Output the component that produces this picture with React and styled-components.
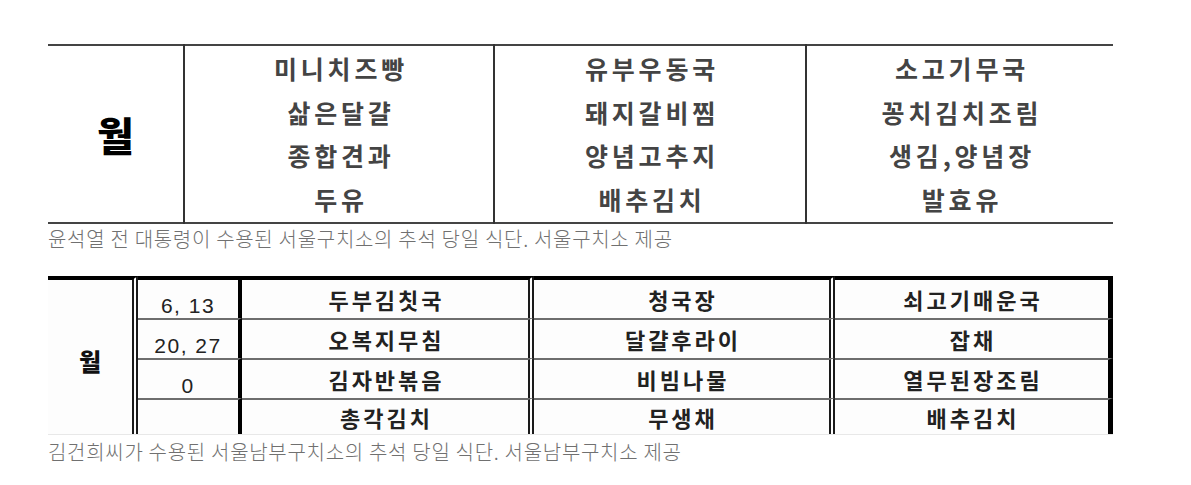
import styled, {createGlobalStyle} from "styled-components";

const GlobalStyle = createGlobalStyle`
  body {
    margin: 0;
    background: #fff;
    font-family: "Noto Sans CJK KR", "Noto Sans", sans-serif;
  }
`;

const Page = styled.div`
  padding: 44px 0 0 48px;
  width: 1065px;
`;

const Figure = styled.figure`
  margin: 0;
`;

const Caption = styled.figcaption`
  font-size: 20px;
  font-weight: 300;
  color: #707070;
  line-height: 24px;
  letter-spacing: 0.7px;
  padding-top: ${(p) => p.$gap}px;
`;

// 첫 번째 표 (서울구치소)
const MenuTable = styled.table`
  width: 1065px;
  table-layout: fixed;
  border-collapse: collapse;
  border-top: 2px solid #444;
  border-bottom: 2px solid #444;
`;

const Col = styled.col`
  width: ${(p) => p.$w}px;
`;

const DayCell = styled.td`
  text-align: center;
  vertical-align: middle;
  font-size: 40px;
  font-weight: 900;
  color: #000;
  padding: 0;
`;

const MenuCell = styled.td`
  border-left: 2px solid #333;
  text-align: center;
  vertical-align: top;
  padding: 1px 0 0 4px;
  font-size: 25px;
  font-weight: 700;
  letter-spacing: 3.8px;
  color: #444;
  line-height: 43.5px;
  height: 175px;
`;

// 두 번째 표 (서울남부구치소)
const ClipBox = styled.div`
  margin-top: 25px;
  height: 158px;
  overflow: hidden;
  border-bottom: 1px solid #e8e8e8;
  background: #fdfdfd;
`;

const WeekTable = styled.table`
  width: 1065px;
  table-layout: fixed;
  border-collapse: separate;
  border-spacing: 0;
`;

const Cell = styled.td`
  box-sizing: border-box;
  width: ${(p) => p.$w}px;
  padding: 0;
  text-align: center;
  vertical-align: middle;
  color: #222;
  border-top: ${(p) => (p.$first ? "4px solid #000" : "2px solid #6e6e6e")};
  border-right: ${(p) =>
    p.$edge === "double"
      ? "6px double #1a1a1a"
      : p.$edge === "thick"
      ? "4px solid #000"
      : p.$edge === "end"
      ? "5px solid #000"
      : "none"};
`;

const WeekDay = styled(Cell)`
  font-size: 24px;
  font-weight: 900;
  color: #111;
  padding-top: 6px;
`;

const DateCell = styled(Cell)`
  font-family: "Liberation Sans", "Noto Sans", sans-serif;
  font-size: 21px;
  letter-spacing: 1.5px;
  vertical-align: bottom;
  line-height: 24px;
`;

const DishCell = styled(Cell)`
  font-size: 22px;
  font-weight: 700;
  letter-spacing: 3px;
  padding-left: 3px;
`;

const Row = styled.tr`
  height: ${(p) => p.$h}px;
`;

const first = [
  ["미니치즈빵", "삶은달걀", "종합견과", "두유"],
  ["유부우동국", "돼지갈비찜", "양념고추지", "배추김치"],
  ["소고기무국", "꽁치김치조림", "생김,양념장", "발효유"],
];

const second = [
  {date: "6, 13", dishes: ["두부김칫국", "청국장", "쇠고기매운국"], h: 42},
  {date: "20, 27", dishes: ["오복지무침", "달걀후라이", "잡채"], h: 40},
  {date: "0", dishes: ["김자반볶음", "비빔나물", "열무된장조림"], h: 40},
  {date: "", dishes: ["총각김치", "무생채", "배추김치"], h: 36},
];

const App = () => {
  return (
    <Page>
      <GlobalStyle />
      <Figure>
        <MenuTable>
          <colgroup>
            <Col $w={136} />
            <Col $w={310} />
            <Col $w={312} />
            <Col $w={307} />
          </colgroup>
          <tbody>
            <tr>
              <DayCell>월</DayCell>
              {first.map((col, i) => (
                <MenuCell key={i}>
                  {col.map((item) => (
                    <div key={item}>{item}</div>
                  ))}
                </MenuCell>
              ))}
            </tr>
          </tbody>
        </MenuTable>
        <Caption $gap={3}>윤석열 전 대통령이 수용된 서울구치소의 추석 당일 식단. 서울구치소 제공</Caption>
      </Figure>

      <Figure>
        <ClipBox>
          <WeekTable>
            <tbody>
              {second.map((row, i) => (
                <Row key={i} $h={row.h}>
                  {i === 0 && (
                    <WeekDay rowSpan={4} $w={90} $first $edge="double">
                      월
                    </WeekDay>
                  )}
                  <DateCell $w={104} $first={i === 0} $edge="thick">
                    {row.date}
                  </DateCell>
                  <DishCell $w={292} $first={i === 0} $edge="double">
                    {row.dishes[0]}
                  </DishCell>
                  <DishCell $w={301} $first={i === 0} $edge="double">
                    {row.dishes[1]}
                  </DishCell>
                  <DishCell $w={278} $first={i === 0} $edge="end">
                    {row.dishes[2]}
                  </DishCell>
                </Row>
              ))}
            </tbody>
          </WeekTable>
        </ClipBox>
        <Caption $gap={5}>김건희씨가 수용된 서울남부구치소의 추석 당일 식단. 서울남부구치소 제공</Caption>
      </Figure>
    </Page>
  );
};

export default App;
